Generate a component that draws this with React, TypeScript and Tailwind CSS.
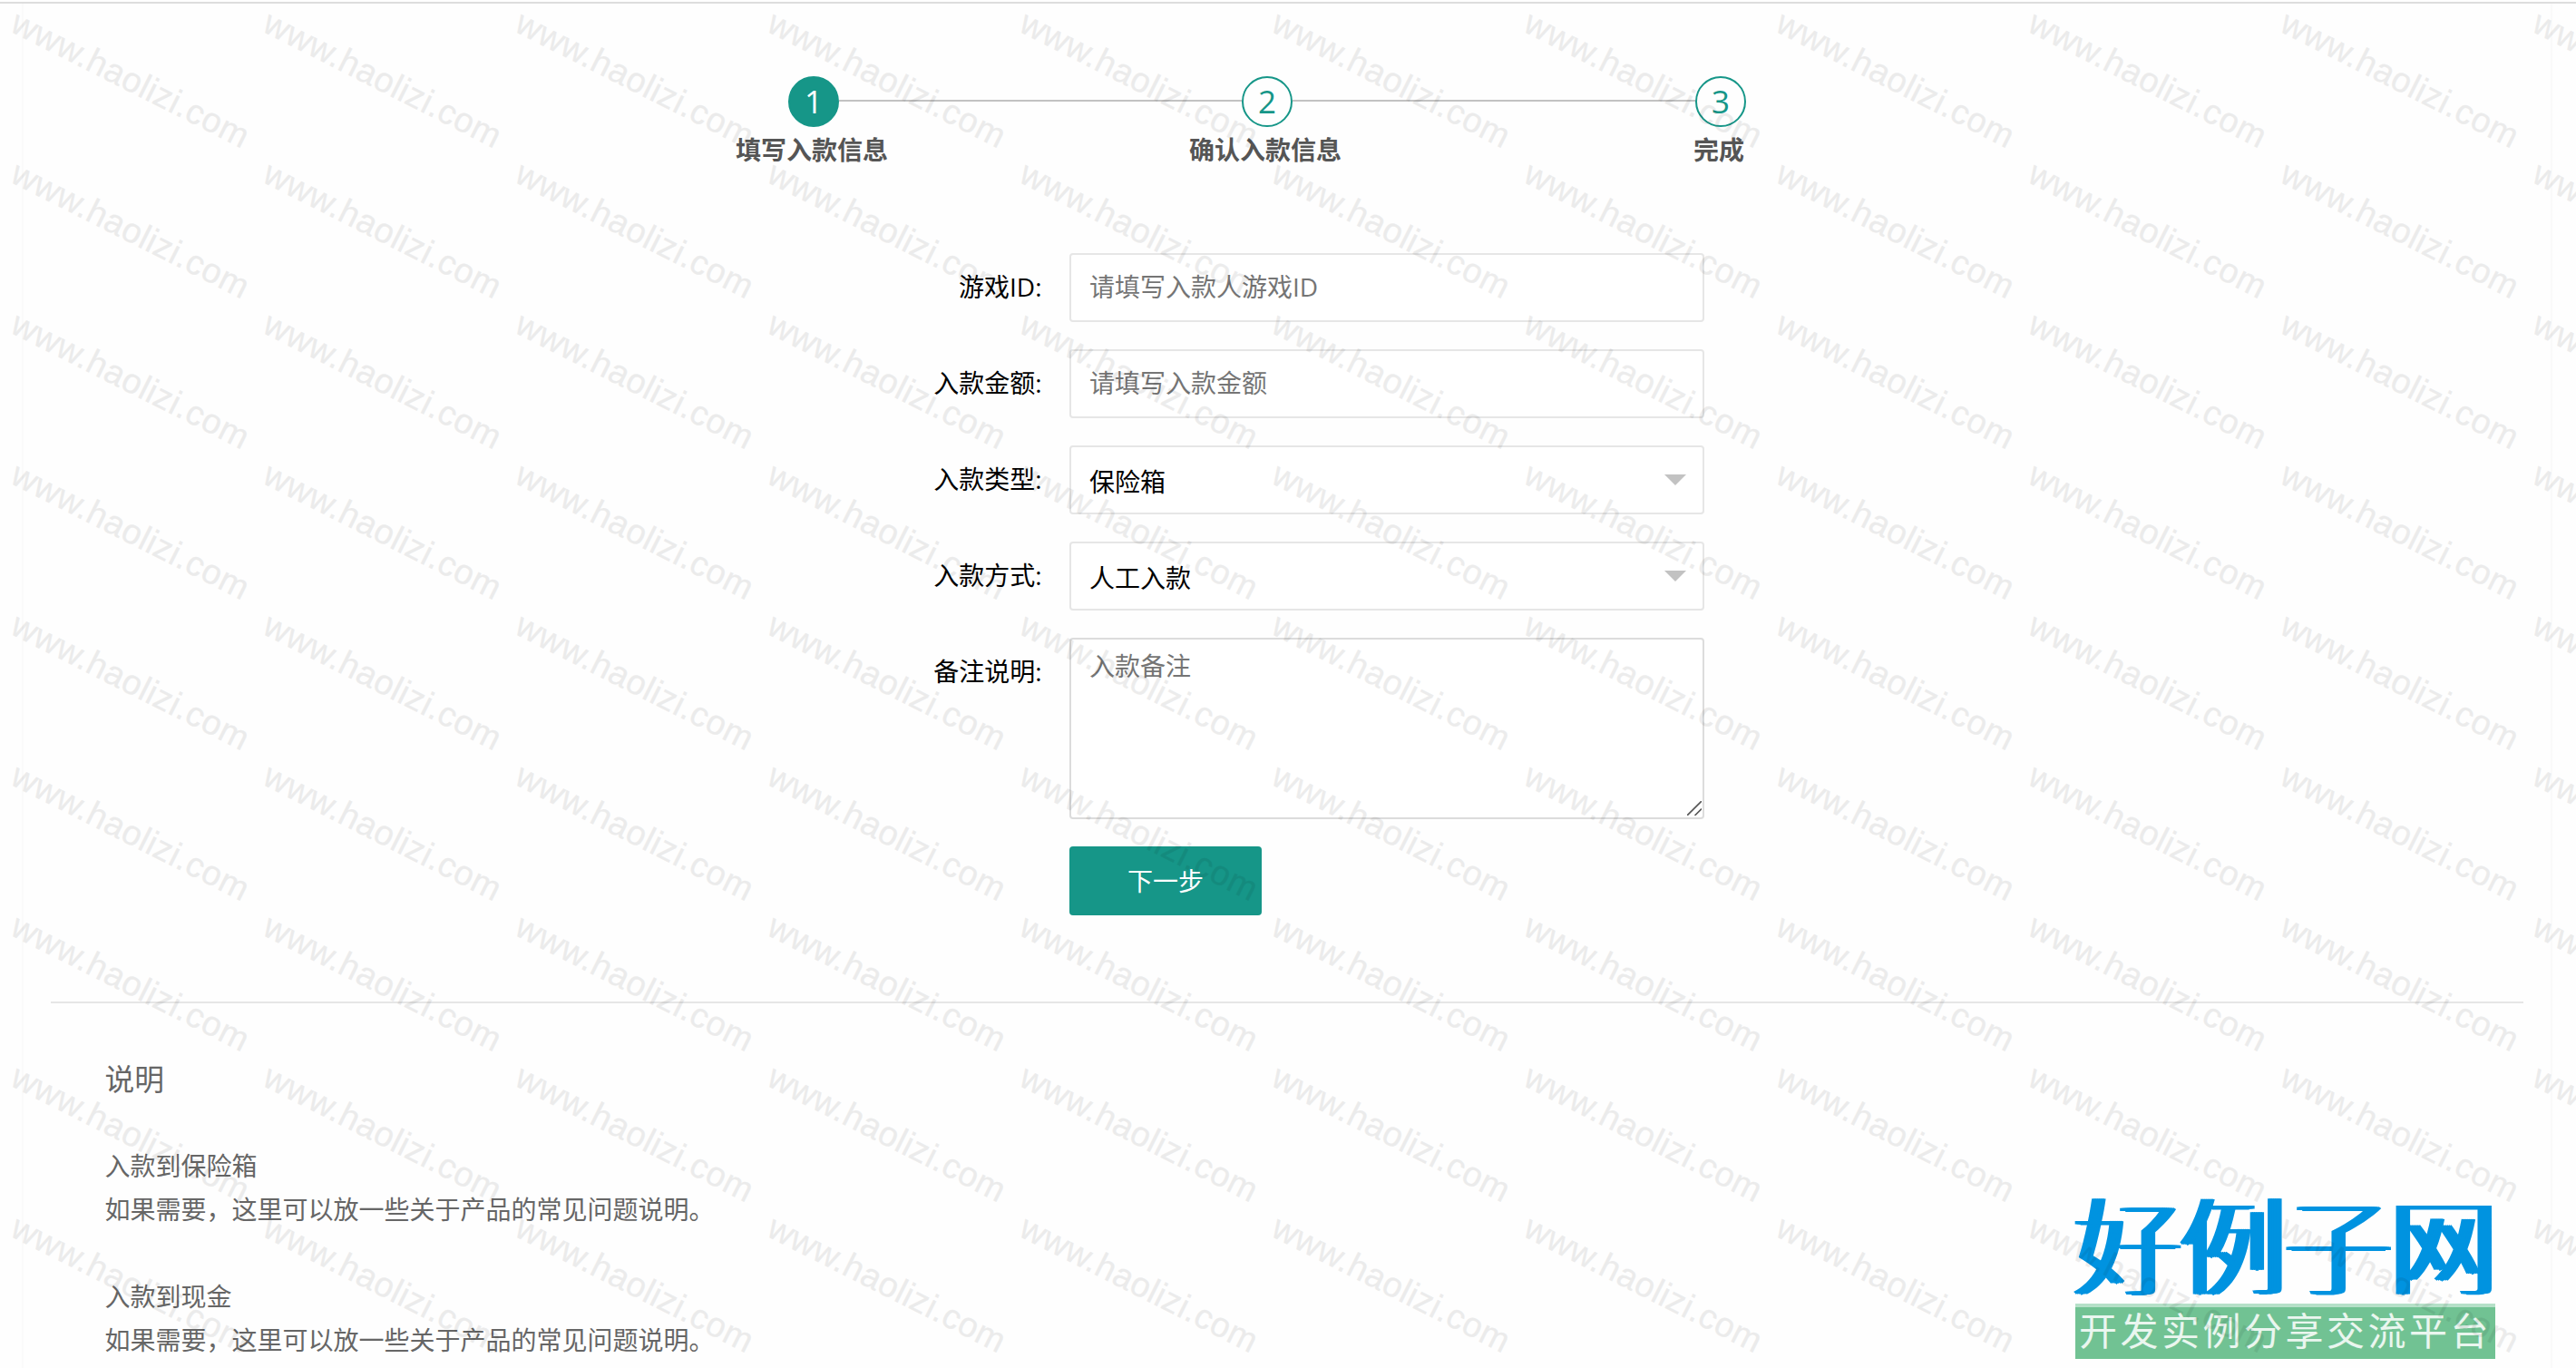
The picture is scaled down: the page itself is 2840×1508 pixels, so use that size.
import { useState } from 'react';
import type { ReactNode } from 'react';
import { clsx } from 'clsx';

const STEPS = ['填写入款信息', '确认入款信息', '完成'];

const NOTES = [
  { title: '入款到保险箱', text: '如果需要，这里可以放一些关于产品的常见问题说明。' },
  { title: '入款到现金', text: '如果需要，这里可以放一些关于产品的常见问题说明。' },
];

// 11 columns x 9 rows of 278x166 tiles
const TILES = Array.from({ length: 99 }, (_, i) => i);

function Steps({ current }: { current: number }) {
  return (
    <div className="ml-[621px] flex">
      {STEPS.map((title, i) => (
        <div key={title} className="w-[500px]">
          <div className="flex">
            <div className={clsx('mt-[26px] h-0.5 flex-1', i > 0 && 'bg-[#c2c2c2]')} />
            <div
              className={clsx(
                'flex h-14 w-14 items-center justify-center rounded-full border-2 border-[#169688] pb-0.5 text-[35px] leading-none',
                i === current ? 'bg-[#169688] text-white' : 'text-[#169688]'
              )}
            >
              {i + 1}
            </div>
            <div className={clsx('mt-[26px] h-0.5 flex-1', i < STEPS.length - 1 && 'bg-[#c2c2c2]')} />
          </div>
          <div className="mt-[5px] pr-1 text-center font-bold leading-10 text-[#555]">{title}</div>
        </div>
      ))}
    </div>
  );
}

function Field({ label, children }: { label: string; children: ReactNode }) {
  return (
    <div className="mb-[30px] flex">
      <label className="w-[220px] pr-[30.5px] text-right leading-[74px] text-black">{label}</label>
      {children}
    </div>
  );
}

function Select({ value }: { value: string }) {
  return (
    <div className="flex h-[76px] w-[700px] justify-between rounded-[4px] border-2 border-[#e6e6e6] bg-white px-5 text-black">
      <span className="leading-[76px]">{value}</span>
      <svg className="mt-[30px] mr-[-2px]" width="24" height="12" viewBox="0 0 24 12" fill="#c2c2c2">
        <path d="M0 0h24L12 12z" />
      </svg>
    </div>
  );
}

function Logo() {
  return (
    <div className="absolute top-[1309px] left-[2288px] w-[463px]">
      {/* sideways shadows thicken the vertical strokes only */}
      <div className="h-[128px] text-[116px] leading-[128px] font-thin whitespace-nowrap text-[#0093e0] [text-shadow:2px_0_#0093e0,-2px_0_#0093e0,4px_0_#0093e0,-4px_0_#0093e0,6px_0_#0093e0,-6px_0_#0093e0,0_1px_#0093e0]">
        好例子网
      </div>
      <div className="h-[61px] border-t-4 border-[#b5e0c8] bg-[#71c293] pl-1 text-[42px] leading-[52px] tracking-[3.5px] whitespace-nowrap text-white/85">
        开发实例分享交流平台
      </div>
    </div>
  );
}

function Watermark() {
  return (
    <div className="pointer-events-none absolute inset-0 grid auto-rows-[166px] grid-cols-[repeat(11,278px)] overflow-hidden opacity-[0.07]">
      {TILES.map((i) => (
        <div key={i} className="pl-1.5">
          <span className="block w-max origin-bottom-left rotate-[26.8deg] font-['Liberation_Sans'] text-[38px] leading-[41px] tracking-[0.5px] text-black [-webkit-text-stroke:0.4px_#000]">
            www.haolizi.com
          </span>
        </div>
      ))}
    </div>
  );
}

export default function App() {
  const [gameId, setGameId] = useState('');
  const [amount, setAmount] = useState('');

  return (
    <div className="relative h-[1508px] w-[2840px] overflow-hidden bg-[#fefefe] pt-0.5 font-['Open_Sans','Noto_Sans_CJK_SC',sans-serif] text-[28px]">
      <div className="h-0.5 bg-[#dddddd]" />
      <main className="mr-[26px] ml-6 h-[1504px] border-x-2 border-[#fafafa] pt-20">
        <Steps current={0} />

        <form className="mt-[94px] ml-[933px]">
          <Field label="游戏ID:">
            <input
              value={gameId}
              onChange={(e) => setGameId(e.target.value)}
              placeholder="请填写入款人游戏ID"
              className="h-[76px] w-[700px] rounded-[4px] border-2 border-[#e6e6e6] bg-white px-5 pb-0.5 placeholder:text-[#757575]"
            />
          </Field>
          <Field label="入款金额:">
            <input
              value={amount}
              onChange={(e) => setAmount(e.target.value)}
              placeholder="请填写入款金额"
              className="h-[76px] w-[700px] rounded-[4px] border-2 border-[#e6e6e6] bg-white px-5 pb-0.5 placeholder:text-[#757575]"
            />
          </Field>
          <Field label="入款类型:">
            <Select value="保险箱" />
          </Field>
          <Field label="入款方式:">
            <Select value="人工入款" />
          </Field>
          <Field label="备注说明:">
            <div className="flex h-[200px] w-[700px] items-end justify-between rounded-[4px] border-2 border-[#dcdcdc] bg-white pl-5">
              <textarea
                placeholder="入款备注"
                className="h-full flex-1 resize-none pt-2 leading-[42px] placeholder:text-[#757575]"
              />
              <svg className="mr-px mb-0.5" width="16" height="16" viewBox="0 0 16 16" stroke="#555" strokeWidth="1.6">
                <path d="M0 16L16 0M8.500 16L16 8.500" />
              </svg>
            </div>
          </Field>
          <button
            type="button"
            className="ml-[220px] block h-[76px] w-[212px] rounded-[4px] bg-[#169688] leading-[75px] text-white"
          >
            下一步
          </button>
        </form>

        <hr className="mx-[30px] mt-[95px] border-t-2 border-[#e6e6e6]" />

        <section className="mt-[60px] ml-[89.5px] text-[#666]">
          <h3 className="text-[32.76px] leading-[48px]">说明</h3>
          {NOTES.map((note, i) => (
            <div key={note.title} className={clsx('leading-[48px]', i === 0 ? 'mt-[47px]' : 'mt-12')}>
              <h4>{note.title}</h4>
              <p>{note.text}</p>
            </div>
          ))}
        </section>
      </main>
      <Logo />
      <Watermark />
    </div>
  );
}
